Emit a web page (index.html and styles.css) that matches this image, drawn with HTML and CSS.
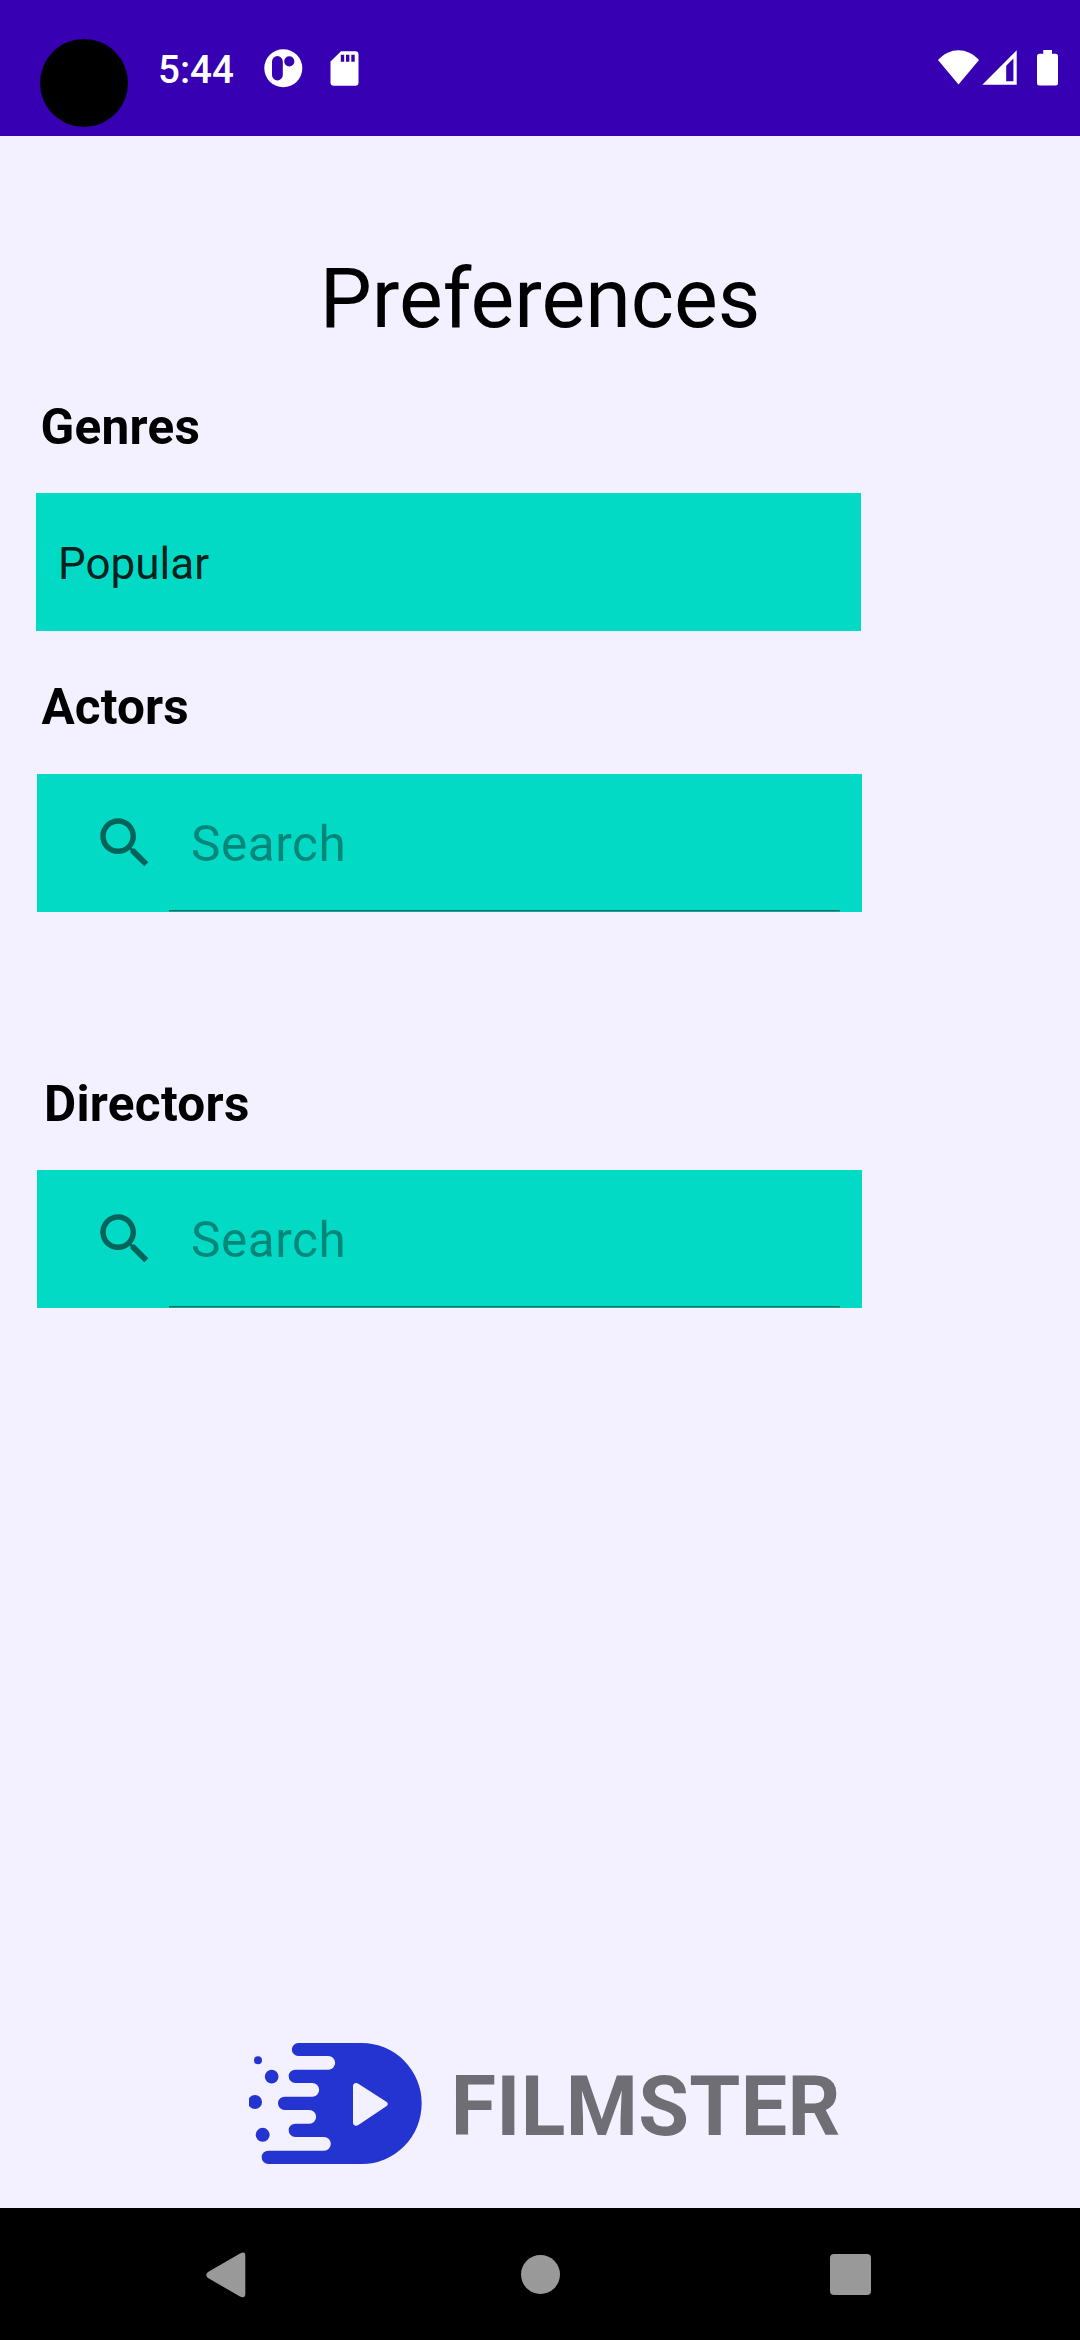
FILE: index.html
```html
<!DOCTYPE html>
<html lang="en">
<head>
<meta charset="utf-8">
<title>Preferences</title>
<link rel="stylesheet" href="styles.css">
</head>
<body>
<div class="screen">
  <header class="status-bar">
    <span class="camera"></span>
    <span class="clock">5:44</span>
    <svg class="icon-app" viewBox="0 0 40 40"><path fill="#fff" fill-rule="evenodd" d="M20.300 1.300a19 19 0 1 1 0 38a19 19 0 1 1 0-38zM9 13.500v13.500a5.400 5.400 0 0 0 10.800 0V13.500a5.400 5.400 0 0 0-10.800 0zM26.300 8.200a5.100 5.100 0 1 0 0 10.200a5.100 5.100 0 1 0 0-10.200z"/></svg>
    <svg class="icon-sd" viewBox="0 0 30 36"><path fill="#fff" fill-rule="evenodd" d="M11 1.200H25.300a3.200 3.200 0 0 1 3.200 3.200V32.500a3.200 3.200 0 0 1-3.200 3.200H3.700a3.200 3.200 0 0 1-3.200-3.200V11.500zM10.800 4.800v7h3.400v-7zM16 4.800v7h3.400v-7zM21.300 4.800v7h3.400v-7z"/></svg>
    <span class="spacer"></span>
    <svg class="icon-wifi" viewBox="0 0 42 36"><path fill="#fff" d="M0 10C6 3.500 13 .2 20.500 .2S35 3.500 41 10L20.500 34.500z"/></svg>
    <svg class="icon-signal" viewBox="0 0 36 36"><path fill="#fff" fill-rule="evenodd" d="M.3 34.700L34.700 .3V34.700zM24.200 15.800v15.400h7.200V8.600z"/></svg>
    <svg class="icon-battery" viewBox="0 0 21 36"><path fill="#fff" d="M6.200 0h8.800v3.800h3.500a2.500 2.500 0 0 1 2.500 2.500V33a2.500 2.500 0 0 1-2.500 2.500h-16A2.500 2.500 0 0 1 0 33V6.300a2.500 2.500 0 0 1 2.500-2.500h3.700z"/></svg>
  </header>

  <main class="content">
    <h1 class="title">Preferences</h1>

    <section class="group genres">
      <h2 class="label">Genres</h2>
      <div class="field select">Popular</div>
    </section>

    <section class="group actors">
      <h2 class="label">Actors</h2>
      <div class="field search">
        <svg class="icon-search" viewBox="0 0 24 24"><path d="M15.500 14h-.79l-.28-.27C15.410 12.590 16 11.110 16 9.500 16 5.910 13.090 3 9.500 3S3 5.910 3 9.500 5.910 16 9.500 16c1.610 0 3.090-.59 4.230-1.570l.27.28v.79l5 4.990L20.490 19l-4.990-5zm-6 0C7.010 14 5 11.990 5 9.500S7.010 5 9.500 5 14 7.010 14 9.500 11.990 14 9.500 14z"/></svg>
        <div class="query">Search</div>
      </div>
    </section>

    <section class="group directors">
      <h2 class="label">Directors</h2>
      <div class="field search">
        <svg class="icon-search" viewBox="0 0 24 24"><path d="M15.500 14h-.79l-.28-.27C15.410 12.590 16 11.110 16 9.500 16 5.910 13.090 3 9.500 3S3 5.910 3 9.500 5.910 16 9.500 16c1.610 0 3.090-.59 4.230-1.570l.27.28v.79l5 4.990L20.490 19l-4.990-5zm-6 0C7.010 14 5 11.990 5 9.500S7.010 5 9.500 5 14 7.010 14 9.500 11.990 14 9.500 14z"/></svg>
        <div class="query">Search</div>
      </div>
    </section>

    <footer class="brand">
      <svg class="logo" viewBox="0 0 519 363">
        <g fill="#2434d0">
          <path d="M148 0H338A180 181.500 0 0 1 338 363H58a20 20 0 0 1 0-40H225a20.500 20.500 0 0 0 0-41H139a20 20 0 0 1 0-40H181a20.500 20.500 0 0 0 0-41H107a20 20 0 0 1 0-40H190a20.500 20.500 0 0 0 0-41H139a20 20 0 0 1 0-40H238a20.500 20.500 0 0 0 0-41H148a19.500 19.500 0 0 1 0-39z"/>
          <circle cx="27" cy="51.500" r="12"/><circle cx="68" cy="101" r="20.500"/><circle cx="18" cy="177" r="21"/><circle cx="41" cy="275.500" r="21"/>
        </g>
        <path fill="#f3f0ff" d="M312 129c0-8 9-12 16-7L412 176c6 4 6 10 0 14L328 246c-7 5-16 1-16-7z"/>
      </svg>
      <span class="brand-name">FILMSTER</span>
    </footer>
  </main>

  <nav class="nav-bar">
    <svg class="nav-back" viewBox="0 0 40 46"><path fill="#999" d="M2 20L34 1.500Q39 -1 39.300 3V42Q39 47 34 44.500L2 26Q-1.500 23 2 20z"/></svg>
    <span class="nav-home"></span>
    <span class="nav-recent"></span>
  </nav>
</div>
</body>
</html>
```

FILE: styles.css
```css
body {
  margin: 0;
  font-family: Roboto, sans-serif;
}

.screen {
  display: flex;
  flex-direction: column;
  width: 1080px;
  height: 2340px;
  overflow: hidden;
  background: #f3f0ff;
  color: #000;
}

.screen svg {
  display: block;
  flex: none;
}

/* Status bar */
.status-bar {
  display: flex;
  align-items: flex-start;
  height: 136px;
  flex: none;
  box-sizing: border-box;
  padding: 39px 22px 0 40px;
  background: #3700b3;
}

.camera {
  width: 88px;
  height: 88px;
  border-radius: 50%;
  background: #000;
}

.clock {
  width: 78px;
  margin: 8px 0 0 30px;
  font-size: 38.5px;
  font-weight: 500;
  line-height: 45px;
  color: #fff;
}

.icon-app { width: 40px; height: 40px; margin: 9px 0 0 27px; }
.icon-sd { width: 30px; height: 36px; margin: 11px 0 0 27px; }
.spacer { flex: 1; }
.icon-wifi { width: 42px; height: 36px; margin-top: 11px; }
.icon-signal { width: 36px; height: 36px; margin: 11px 0 0 2px; }
.icon-battery { width: 21px; height: 36px; margin: 11px 0 0 19px; }

/* Form */
.content {
  display: flex;
  flex-direction: column;
  flex: 1;
  min-height: 0;
  padding: 114px 0 44px;
}

.title {
  margin: 0;
  font-size: 82.5px;
  font-weight: 400;
  line-height: 97px;
  text-align: center;
}

.group {
  display: flex;
  flex-direction: column;
  gap: 37px;
  width: 825px;
  margin-left: 37px;
}

.genres { margin: 51px 0 0 36px; }
.actors { margin-top: 47px; gap: 38px; }
.directors { margin-top: 163px; }

.label {
  margin: 0;
  padding-left: 4.5px;
  font-size: 49.5px;
  font-weight: 700;
  line-height: 58px;
  letter-spacing: 0.3px;
}

.actors .label { letter-spacing: 0.1px; }
.directors .label { padding-left: 7px; }

.field {
  display: flex;
  height: 138px;
  box-sizing: border-box;
  background: #03dac5;
}

.select {
  align-items: center;
  padding: 4px 0 0 22px;
  font-size: 44px;
  color: rgba(0, 0, 0, 0.87);
}

.search { padding-right: 22px; }

.icon-search {
  width: 66px;
  height: 66px;
  margin: 36px 11px 0 55px;
  fill: rgba(0, 0, 0, 0.54);
}

.query {
  flex: 1;
  height: 136px;
  box-sizing: border-box;
  padding: 41px 0 0 22px;
  box-shadow: 0 1px 0 rgba(0, 0, 0, 0.38), 0 2px 0 rgba(0, 0, 0, 0.2);
  font-size: 49.5px;
  line-height: 58px;
  letter-spacing: 0.55px;
  color: rgba(0, 0, 0, 0.38);
}

/* Brand */
.brand {
  display: flex;
  align-items: flex-end;
  margin-top: auto;
  padding-left: 249px;
}

.logo { width: 173px; height: 121px; }

.brand-name {
  margin: 0 0 9px 28.7px;
  font-size: 82.5px;
  font-weight: 700;
  line-height: 97px;
  letter-spacing: 0.3px;
  color: #706e75;
}

/* Navigation bar */
.nav-bar {
  display: flex;
  align-items: flex-start;
  height: 132px;
  flex: none;
  box-sizing: border-box;
  padding-left: 206px;
  background: #000;
}

.nav-back { width: 40px; height: 46px; margin-top: 44px; }
.nav-home { width: 39px; height: 39px; margin: 47px 0 0 275px; border-radius: 50%; background: #999; }
.nav-recent { width: 41px; height: 41px; margin: 46px 0 0 270px; border-radius: 4px; background: #999; }
```
